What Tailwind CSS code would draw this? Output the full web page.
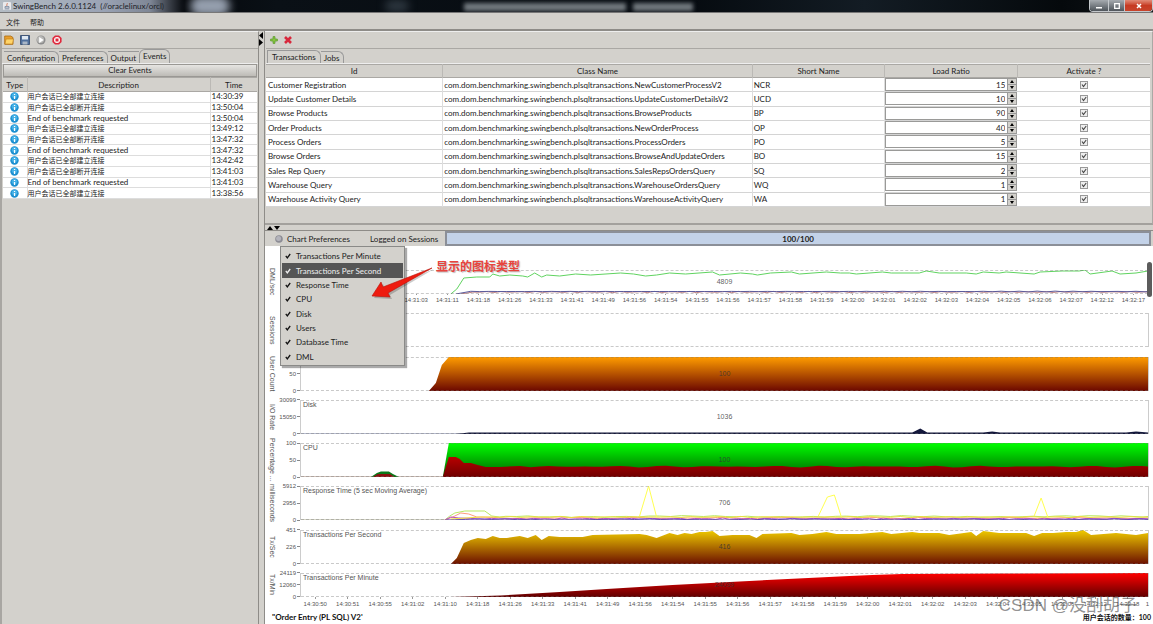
<!DOCTYPE html>
<html lang="zh-CN">
<head>
<meta charset="utf-8">
<title>SwingBench 2.6.0.1124</title>
<script src="https://cdn.jsdelivr.net/npm/@tailwindcss/browser@4"></script>
</head>
<body class="flex min-h-screen flex-col overflow-hidden bg-[#d3d1cc] font-[Lato,'Noto_Sans_CJK_SC',sans-serif] text-[8px] leading-[10px] text-[#222]">

<!-- Window title bar -->
<header class="relative flex h-[13px] items-center justify-between overflow-hidden border-b border-[#777] bg-[linear-gradient(90deg,#b4bcc4_0,#9aa3b4_9%,#7f8796_13%,#05080c_16%,#0a1016_24%,#060b10_60%,#131c24_75%,#05090c_92%,#101418_100%)]">
  <div class="absolute left-[190px] h-5 w-10 rounded-full bg-[#b9c4d6]/80 blur-[4px]"></div>
  <div class="absolute left-[385px] h-3 w-6 rounded-full bg-[#52606c]/50 blur-[4px]"></div>
  <div class="absolute top-[3px] left-[464px] h-2 w-[162px] bg-[#7d858b]/90 blur-[2px]"></div>
  <div class="absolute top-[3px] left-[633px] h-2 w-[60px] bg-[#7d858b]/90 blur-[2px]"></div>
  <h1 class="relative flex items-center gap-[2px] pl-[3px] whitespace-pre text-[#1d2228]"><svg class="size-2" viewBox="0 0 8 8"><rect width="8" height="8" rx="1" fill="#e9e9ec"/><path d="M4 1c1 1-1 1.500 0 3" stroke="#c8603c" fill="none" stroke-width=".8"/><path d="M2 4.500h4v1.500H2zM1.500 7h5" stroke="#6b7c96" fill="none" stroke-width=".7"/></svg><span>SwingBench 2.6.0.1124  (//oraclelinux/orcl)</span></h1>
  <div class="relative flex h-[12px] self-start overflow-hidden rounded-b-sm border border-t-0 border-[#c4c8cc]">
    <button aria-label="Minimize" class="grid w-[18px] place-items-center bg-linear-to-b from-[#a6abb0] to-[#50565c]"><svg class="h-2 w-2" viewBox="0 0 8 8"><path d="M1 5h6v1.500H1z" fill="#fff"/></svg></button>
    <button aria-label="Restore" class="grid w-[16px] place-items-center border-l border-[#c4c8cc] bg-linear-to-b from-[#a6abb0] to-[#50565c]"><svg class="h-2 w-2" viewBox="0 0 8 8"><path d="M1.700 1.700h4.600v4.600H1.700z" fill="none" stroke="#fff" stroke-width="1.300"/></svg></button>
    <button aria-label="Close" class="grid w-[28px] place-items-center border-l border-[#c4c8cc] bg-linear-to-b from-[#e08b78] via-[#c63a22] to-[#c8452c]"><svg class="h-2 w-2" viewBox="0 0 8 8"><path d="M2 2l4 4M6 2l-4 4" stroke="#fff" stroke-width="1.500"/></svg></button>
  </div>
</header>

<nav class="flex h-[18px] items-center gap-[10px] border-b-2 border-[#8e8c88] pt-px pl-[6px] text-[7px]">
  <button>文件</button><button>帮助</button>
</nav>

<main class="flex grow">
  <!-- Events pane -->
  <section class="flex w-[259px] shrink-0 flex-col border-t border-r border-l-2 border-t-[#eee] border-r-[#8e8c88] border-l-[#a8a6a2]">
    <div class="flex h-[17px] items-center gap-[6px] border-b border-[#aaa8a4] pl-[2px]">
      <button aria-label="Open"><svg class="size-[10px]" viewBox="0 0 10 10"><path d="M.7 1h6l2.300 1.500v6.800H.7z" fill="#eaa02c" stroke="#a96a10" stroke-width=".8"/><path d="M2 4h7.500L8.500 9H1z" fill="#ffd468" stroke="#b9781a" stroke-width=".6"/></svg></button>
      <button aria-label="Save"><svg class="size-[10px]" viewBox="0 0 10 10"><path d="M.5.5h9v9h-9z" fill="#4f6f9c" stroke="#2e4568" stroke-width=".8"/><path d="M2 1h6v3.500H2z" fill="#dfe8f2"/><path d="M2.500 6.500h5v3h-5z" fill="#a9b6c6"/></svg></button>
      <button aria-label="Run"><svg class="size-[10px]" viewBox="0 0 10 10"><circle cx="5" cy="5" r="4.500" fill="#8d8d8d"/><circle cx="4.500" cy="4.500" r="3.500" fill="#b9b9b7"/><path d="M3.200 2l4.500 3-4.500 3z" fill="#fff"/></svg></button>
      <button aria-label="Stop"><svg class="size-[10px]" viewBox="0 0 10 10"><path d="M3 .4h4L9.600 3v4L7 9.600H3L.4 7V3z" fill="#e0283c"/><circle cx="5" cy="5" r="3" fill="#fff"/><rect x="3.500" y="3.500" width="3" height="3" fill="#e0283c"/></svg></button>
    </div>
    <div role="tablist" class="flex h-[15px] items-end border-b border-[#eee] pl-[2px]">
      <button role="tab" class="h-3 rounded-tr-md border-t border-r border-[#999] px-[3px]">Configuration</button>
      <button role="tab" class="h-3 rounded-tr-md border-t border-r border-[#999] px-[3px]">Preferences</button>
      <button role="tab" class="h-3 border-t border-[#999] px-[3px]">Output</button>
      <button role="tab" aria-selected="true" class="h-[14px] rounded-t-md border border-b-0 border-[#999] px-[3px] pb-[2px]">Events</button>
    </div>
    <button class="mx-px h-[13px] border border-[#9a9894] bg-linear-to-b from-[#e6e5e2] to-[#bdbbb6] leading-[11px]">Clear Events</button>
    <table class="mx-px h-[122px] table-fixed border-collapse">
      <thead class="bg-[#d3d1cc]"><tr class="h-[14px] border-t border-b border-[#aaa8a4]">
        <th class="w-[24px] border-r border-[#bbb9b5] font-normal">Type</th>
        <th class="border-r border-[#bbb9b5] font-normal">Description</th>
        <th class="w-[47px] font-normal">Time</th></tr></thead>
      <tbody id="events" class="bg-white"></tbody>
    </table>
  </section>

  <!-- Vertical splitter -->
  <div class="flex w-[6px] shrink-0 flex-col border-r border-[#8e8c88] pt-px">
    <button aria-label="Collapse left pane" class="h-[7px]"><svg class="h-[7px] w-1" viewBox="0 0 4 7"><path d="M4 0v7L0 3.500z"/></svg></button>
    <button aria-label="Collapse right pane" class="h-[7px]"><svg class="h-[7px] w-1" viewBox="0 0 4 7"><path d="M0 0v7l4-3.500z"/></svg></button>
  </div>

  <div class="flex min-w-0 grow flex-col">
    <!-- Transactions pane -->
    <section class="flex flex-col border-t border-r border-b-2 border-t-[#eee] border-r-[#aaa8a4] border-b-[#a3a19d] pr-[2px] pl-px">
      <div class="flex h-[17px] items-center gap-[6px] border-b border-[#aaa8a4] pl-1">
        <button aria-label="Add"><svg class="size-2" viewBox="0 0 8 8"><path d="M3 .6h2V3h2.400v2H5v2.400H3V5H.6V3H3z" fill="#86c440" stroke="#5a9a2c" stroke-width=".7"/></svg></button>
        <button aria-label="Remove"><svg class="size-2" viewBox="0 0 8 8"><path d="M1 1l6 6M7 1L1 7" stroke="#d8283c" stroke-width="2.600"/></svg></button>
      </div>
      <div role="tablist" class="flex h-[15px] items-end border-b border-[#eee] pl-px">
        <button role="tab" aria-selected="true" class="h-[13px] rounded-tr-md border border-b-0 border-[#999] px-1">Transactions</button>
        <button role="tab" class="h-3 rounded-tr-md border-t border-r border-[#999] px-[3px]">Jobs</button>
      </div>
      <table class="h-[143px] w-full table-fixed border-collapse">
        <thead><tr class="h-[13px] border-t border-b border-[#aaa8a4]">
          <th class="w-[20%] border-r border-[#bbb9b5] font-normal">Id</th>
          <th class="w-[35%] border-r border-[#bbb9b5] font-normal">Class Name</th>
          <th class="w-[15%] border-r border-[#bbb9b5] font-normal">Short Name</th>
          <th class="w-[15%] border-r border-[#bbb9b5] font-normal">Load Ratio</th>
          <th class="w-[15%] font-normal">Activate ?</th></tr></thead>
        <tbody id="transactions" class="bg-white"></tbody>
      </table>
      <div class="h-[16px]"></div>
    </section>

    <!-- Horizontal splitter -->
    <div class="flex h-[6px] items-center gap-px border-b border-[#8e8c88] pl-[2px]">
      <button aria-label="Collapse top pane"><svg class="block h-1 w-[6px]" viewBox="0 0 6 4"><path d="M0 4h6L3 0z"/></svg></button>
      <button aria-label="Collapse bottom pane"><svg class="block h-1 w-[6px]" viewBox="0 0 6 4"><path d="M0 0h6L3 4z"/></svg></button>
    </div>

    <div class="relative flex h-[15px] shrink-0 items-stretch">
      <button aria-haspopup="menu" aria-expanded="true" class="flex items-center gap-1 pr-5 pl-[10px] whitespace-nowrap">
        <svg class="size-2" viewBox="0 0 8 8"><circle cx="4" cy="4" r="3.800" fill="#8c8c94"/><circle cx="3.600" cy="3.400" r="2.500" fill="#b4b4bc"/></svg>Chart Preferences</button>
      <label for="sessions" class="flex items-center pr-[7px] whitespace-nowrap">Logged on Sessions</label>
      <div id="sessions" role="progressbar" aria-valuenow="100" aria-valuemax="100" class="mr-[2px] flex grow items-center justify-center border-2 border-[#8b8f98] bg-[#c3d2e8] font-bold">100/100</div>

      <div role="menu" class="absolute top-full left-[15px] z-10 flex h-[120px] w-[125px] flex-col border border-[#8a8a88] bg-[#d3d1cc] px-px pt-[2px] pb-px shadow-[2px_2px_1px_#0005]" id="chart-menu"></div>
      <svg class="absolute top-[36px] left-[105px] z-20 h-[32px] w-[66px]" viewBox="0 0 66 32"><path d="M4 31L13 17l2 5L64 2 20 28l2 4z" fill="#0003"/><path d="M2 29L11 15l2 5L62 1 18 26l2 4z" fill="#ee1c10" stroke="#b81008" stroke-width=".6"/></svg>
      <p class="absolute top-[28px] left-[171px] z-20 font-['Noto_Sans_CJK_SC',sans-serif] text-[12px] leading-[14px] font-bold whitespace-nowrap text-[#e8433c] [text-shadow:1px_1px_1px_#0004]">显示的图标类型</p>
    </div>

    <!-- Charts -->
    <section class="relative flex grow flex-col justify-between bg-white font-['Liberation_Sans',sans-serif] text-[7px] leading-2 text-[#555]" id="charts"></section>

    <footer class="relative flex h-[13px] items-center justify-between bg-white pr-[2px] pb-[2px] pl-[7px] font-bold text-[#111]">
      <span>"Order Entry (PL SQL) V2'</span>
      <span class="text-[7px]">用户会话的数量：100</span>
      <span class="absolute right-[16px] bottom-[8px] z-10 font-['Liberation_Sans','Noto_Sans_CJK_SC',sans-serif] text-[17px] leading-[20px] font-normal whitespace-nowrap text-[#555]/65">CSDN @没刮胡子</span>
    </footer>
  </div>
</main>

<script>
const on = '用户会话已全部建立连接', off = '用户会话已全部断开连接', end = 'End of benchmark requested';
const events = [
  { d: on, t: '14:30:39' }, { d: off, t: '13:50:04' }, { d: end, t: '13:50:04' }, { d: on, t: '13:49:12' }, { d: off, t: '13:47:32' },
  { d: end, t: '13:47:32' }, { d: on, t: '13:42:42' }, { d: off, t: '13:41:03' }, { d: end, t: '13:41:03' }, { d: on, t: '13:38:56' }
];
document.getElementById('events').innerHTML = events.map(({ d, t }) => `<tr class="border-b border-[#ddd] leading-[9px]">
  <td class="border-r border-[#ddd]"><svg class="mx-auto block size-[9px]" viewBox="0 0 9 9" role="img" aria-label="Info"><circle cx="4.500" cy="4.500" r="4.200" fill="#1c8fd0"/><circle cx="4.500" cy="3.500" r="2.800" fill="#43b0e6"/><path d="M3.900 3.900h1.300v3H3.900zM3.900 1.900h1.300v1.200H3.900z" fill="#fff"/></svg></td>
  <td class="border-r border-[#ddd] whitespace-nowrap ${d === end ? 'text-[8px]' : 'text-[7px]'}">${d}</td><td class="pl-px">${t}</td></tr>`).join('');

const pkg = 'com.dom.benchmarking.swingbench.plsqltransactions.';
const transactions = [
  ['Customer Registration', 'NewCustomerProcessV2', 'NCR', 15],
  ['Update Customer Details', 'UpdateCustomerDetailsV2', 'UCD', 10],
  ['Browse Products', 'BrowseProducts', 'BP', 90],
  ['Order Products', 'NewOrderProcess', 'OP', 40],
  ['Process Orders', 'ProcessOrders', 'PO', 5],
  ['Browse Orders', 'BrowseAndUpdateOrders', 'BO', 15],
  ['Sales Rep Query', 'SalesRepsOrdersQuery', 'SQ', 2],
  ['Warehouse Query', 'WarehouseOrdersQuery', 'WQ', 1],
  ['Warehouse Activity Query', 'WarehouseActivityQuery', 'WA', 1]
];
document.getElementById('transactions').innerHTML = transactions.map(([id, cls, short, load]) => `<tr class="border-b border-[#d4d4d4]">
  <td class="border-r border-[#ddd] pl-[2px] whitespace-nowrap">${id}</td>
  <td class="border-r border-[#ddd] pl-px whitespace-nowrap">${pkg}${cls}</td>
  <td class="border-r border-[#ddd] pl-px">${short}</td>
  <td class="p-0"><div class="flex h-[13px] border border-[#9a9a98]">
    <input type="text" inputmode="numeric" aria-label="Load ratio, ${id}" value="${load}" class="w-0 grow pr-[2px] text-right">
    <div class="flex w-[9px] flex-col border-l border-[#999] bg-[#d3d1cc]">
      <button aria-label="Increase" class="grid h-[6px] place-items-center border-b border-[#999]"><svg class="h-[3px] w-1" viewBox="0 0 4 3"><path d="M0 3h4L2 0z"/></svg></button>
      <button aria-label="Decrease" class="grid h-[5px] place-items-center"><svg class="h-[3px] w-1" viewBox="0 0 4 3"><path d="M0 0h4L2 3z"/></svg></button>
    </div></div></td>
  <td class="p-0"><label class="mx-auto grid size-2 *:col-start-1 *:row-start-1">
    <input type="checkbox" checked aria-label="Activate ${id}" class="size-2 appearance-none border border-[#999] bg-[#eee]">
    <svg class="size-2" viewBox="0 0 8 8"><path d="M2 3.500l1.500 2L6.200 2" fill="none" stroke="#444" stroke-width="1.100"/></svg></label></td></tr>`).join('');

const menu = ['Transactions Per Minute', 'Transactions Per Second', 'Response Time', 'CPU', 'Disk', 'Users', 'Database Time', 'DML'];
document.getElementById('chart-menu').innerHTML = menu.map((t, i) => `<button role="menuitemcheckbox" aria-checked="true" class="flex flex-1 items-center gap-[5px] pl-[3px] ${i === 1 ? 'bg-[#555] text-[#eee]' : ''}">
    <svg class="size-[6px]" viewBox="0 0 6 6"><path d="M.8 2.800l1.500 2L5.200 1" fill="none" stroke="${i === 1 ? '#eee' : '#111'}" stroke-width="1.300"/></svg>${t}</button>`).join('');

/* Plots share a horizontal range of 848 units; y grows downwards from the top grid line. */
const area = (pts, fill, h = 34) => `<polygon points="${pts} 848,${h}" fill="${fill}"/>`;
const line = (pts, c, w = 1) => `<polyline points="${pts}" fill="none" stroke="${c}" stroke-width="${w}"/>`;
const grad = (id, a, b) => `<linearGradient id="${id}" x1="0" y1="0" x2="0" y2="1"><stop stop-color="${a}"/><stop offset="1" stop-color="${b}"/></linearGradient>`;
const wave = (from, base, amp, step, seed) => { let s = ''; for (let x = from; x < 848; x += step) s += `${x},${(base + amp * Math.sin(x * seed) * Math.cos(x * .37 + seed)).toFixed(1)} `; return s + `848,${base}`; };

const times = (list) => list.split(' ').map(t => `<div class="flex w-0 flex-1 flex-col items-center"><i class="h-[2px] w-px bg-[#999]"></i><span class="mt-px">${t}</span></div>`).join('');
const dmlTimes = '14:30:50 14:30:51 14:30:55 14:31:03 14:31:11 14:31:18 14:31:26 14:31:33 14:31:41 14:31:49 14:31:56 14:31:54 14:31:55 14:31:56 14:31:57 14:31:58 14:31:59 14:32:00 14:32:01 14:32:02 14:32:03 14:32:04 14:32:05 14:32:06 14:32:07 14:32:12 14:32:17';
const tpmTimes = '14:30:50 14:30:51 14:30:55 14:31:02 14:31:10 14:31:18 14:31:26 14:31:33 14:31:41 14:31:49 14:31:56 14:31:54 14:31:55 14:31:56 14:31:57 14:31:58 14:31:59 14:32:00 14:32:01 14:32:02 14:32:03 14:32:04 14:32:05 14:32:06 14:32:12 14:32:18';

const charts = [
  { label: 'DML/sec', ticks: [], title: '', value: '4809', h: 24, top: true,
    draw: line('150,24 156,19 163,8 176,7 189,7 192,4 199,6 209,5 222,6 227,7 234,3 241,7 246,5 259,6 275,4 290,5 320,3 333,4 345,6 356,5 369,3 385,4 412,2 419,5 440,3 452,4 457,5 470,3 491,2 499,4 526,2 540,3 549,3 556,4 582,2 591,3 619,3 626,1 639,3 666,3 676,4 683,2 699,3 706,2 734,4 740,2 762,1 779,1 785,0 790,4 812,1 820,4 836,3 848,1', '#5fd35f')
      + line('160,24 ' + wave(172, 22, .6, 7, .9), '#c08080') + line('155,24 ' + wave(170, 21.5, .6, 9, .7), '#5a5a9c') },
  { label: 'Sessions', ticks: [], title: '', value: '', h: 34, draw: '' },
  { label: 'User Count', ticks: [100, 50, 0], title: '', value: '100', h: 34,
    draw: grad('gu', '#ff9c00', '#6c0800') + area('128,34 135,26 141,8 148,0 848,0', 'url(#gu)') },
  { label: 'I/O Rate', ticks: [30099, 15050, 0], title: 'Disk', value: '1036', h: 34,
    draw: line('0,33.500 848,33.500', '#8890b0', .6) + area('155,34 168,32.500 612,32.500 620,28.500 627,32.500 683,32.500 692,31.500 700,32.500 826,32.500 836,31.500 848,32.500', '#14183c') },
  { label: 'Percentage ...', ticks: [100, 50, 0], title: 'CPU', value: '100', h: 34,
    draw: grad('gc', '#00ff00', '#006000') + grad('gr', '#b80000', '#700000') + line('0,33.500 142,33.500', '#a08070', .5)
      + '<polygon points="70,34 76,30 80,28.500 88,28.500 92,31 98,34" fill="#0a7a1a"/><polygon points="72,34 77,31 89,31 94,34" fill="#8a1010"/>'
      + area('142,34 148,0 848,0', 'url(#gc)') + area('142,34 148,14 155,14 159,16 163,20 170,20 177,22 185,24 199,24 219,23 ' + wave(230, 23.6, .9, 9, .21), 'url(#gr)') },
  { label: 'milliseconds', ticks: [5912, 2956, 0], title: 'Response Time (5 sec Moving Average)', value: '706', h: 34,
    draw: line('0,33.500 144,33.500', '#b8b8a0', .6) + line('144,34 149,30 154,27 164,25 184,25 191,30 199,31 ' + wave(205, 30.5, 1, 11, .17), '#b8e860')
      + line('144,34 152,31 160,27 168,28 176,31 ' + wave(185, 32, .8, 8, .5), '#ff9a80')
      + line('144,34 150,31 158,32 ' + wave(170, 32.8, .8, 7, .8), '#b050c0') + line('146,34 ' + wave(165, 33.5, .7, 13, .33), '#6040c8')
      + line('150,33 ' + wave(180, 31, .6, 10, .61), '#f0e040')
      + line('339,30 348,0 356,31', '#ffff50') + line('518,30 527,11 534,9 541,31', '#ffff50') + line('734,30 741,12 748,32', '#ffff50') },
  { label: 'Tx/Sec', ticks: [451, 226, 0], title: 'Transactions Per Second', value: '416', h: 34,
    draw: grad('gt', '#f0cc00', '#6c1000') + area('150,34 156,28 163,13 170,10 177,8 185,9 192,6 199,8 206,8 219,6 227,8 235,5 241,10 248,6 259,7 282,7 292,5 339,4 346,5 356,8 369,3 377,5 384,3 391,4 399,2 405,2 412,1 419,6 432,5 449,5 456,8 462,4 491,3 499,5 512,4 526,2 536,4 559,4 582,2 591,4 612,2 619,3 639,3 649,5 671,2 676,6 683,1 699,3 726,3 734,6 742,3 753,3 766,2 776,2 783,0 791,5 816,3 836,5 848,3', 'url(#gt)') },
  { label: 'Tx/Min', ticks: [24119, 12060, 0], title: 'Transactions Per Minute', value: '24099', h: 24, bottom: true,
    draw: grad('gm', '#ff0000', '#600000') + area('150,24 200,22.500 259,19 306,16 372,12 439,8.500 549,3 572,2 602,1 700,.5 848,0', 'url(#gm)', 24) }
];

document.getElementById('charts').innerHTML = charts.map(c => `
  <div class="${c.top ? 'pt-6' : ''}">
    <div class="flex ${c.h === 24 ? 'h-6' : 'h-[34px]'} pr-1">
      <div class="flex w-[14px] shrink-0 items-center justify-center whitespace-nowrap [writing-mode:vertical-rl]">${c.label}</div>
      <div class="-my-1 flex w-[21px] shrink-0 flex-col justify-between text-[6px]">${c.ticks.map(t => `<span class="flex items-center justify-end gap-px">${t}<i class="h-px w-[3px] bg-[#888]"></i></span>`).join('')}</div>
      <div class="relative min-w-0 grow border-x border-[#ccc]">
        <svg class="block h-full w-full" viewBox="0 0 848 ${c.h}" preserveAspectRatio="none">
          ${c.draw}<path d="M0 .5H848M0 ${c.h - .5}H848" stroke="#777" stroke-opacity=".4" stroke-dasharray="3 2"/></svg>
        <span class="absolute top-[1px] left-[2px]">${c.title}</span>
        <span class="absolute inset-0 flex items-center justify-center text-[#333]/80">${c.value}</span>
      </div>
    </div>
    ${c.top ? `<div class="ml-[42px] flex h-[10px] pr-1 text-[6px]">${times(dmlTimes)}</div>` : ''}
    ${c.bottom ? `<div class="ml-[34px] flex h-[14px] pr-1 text-[6px]">${times(tpmTimes)}<span class="w-[5px] pt-[3px] text-right">1</span></div>` : ''}
  </div>`).join('') + '<div class="absolute top-[16px] right-px h-[35px] w-[5px] rounded-full bg-[#5c5c5c]"></div>';
</script>
</body>
</html>
